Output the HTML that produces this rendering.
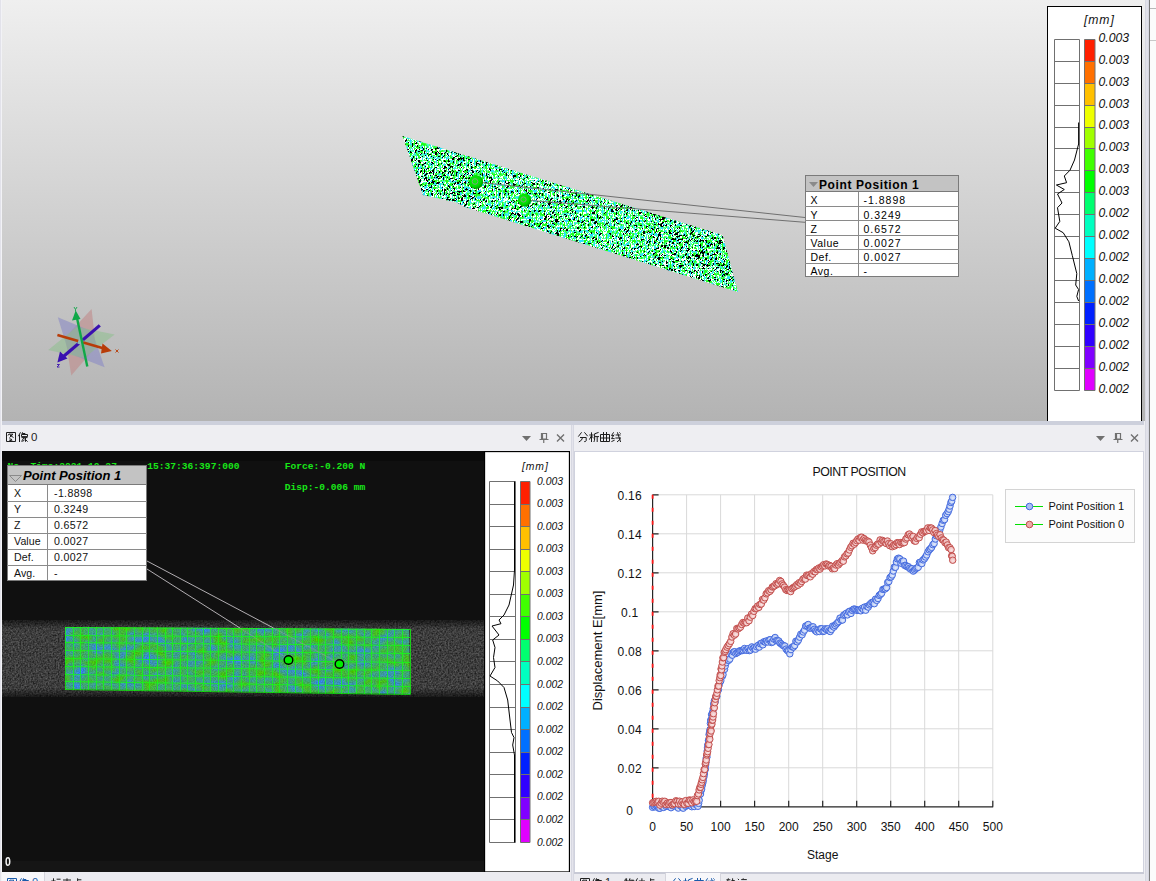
<!DOCTYPE html><html><head><meta charset="utf-8"><style>
*{margin:0;padding:0}
body{width:1156px;height:881px;overflow:hidden;position:relative;background:#eeeef2;font-family:"Liberation Sans",sans-serif}
.a{position:absolute}
</style></head><body><div class="a" style="left:0;top:0;width:1px;height:881px;background:#e2e2ea"></div><div class="a" style="left:1px;top:0;width:1px;height:881px;background:#f2f2f6"></div><div class="a" style="left:2px;top:0;width:1143px;height:421px;background:linear-gradient(#efefef,#b3b3b3)"></div><div class="a" style="left:1145px;top:0;width:4px;height:881px;background:linear-gradient(90deg,#d0d2dc,#e6e6ee,#d0d2dc)"></div><div class="a" style="left:1149px;top:0;width:1px;height:881px;background:#7a7a7a"></div><div class="a" style="left:1150px;top:0;width:6px;height:881px;background:#fbfbfb"></div><div class="a" style="left:1150px;top:8px;width:6px;height:1px;background:#b8b8b8"></div><div class="a" style="left:1150px;top:40px;width:6px;height:1px;background:#c8c8c8"></div><div class="a" style="left:2px;top:421px;width:1142px;height:4px;background:#cdd0dc"></div><div class="a" style="left:571px;top:425px;width:3px;height:456px;background:linear-gradient(90deg,#d0d2dc,#e4e4ec,#d0d2dc)"></div><svg class="a" width="1145" height="421" style="left:0;top:0">
<defs>
<clipPath id="cp"><polygon points="402.5,136 722.5,235 738,292 465,207 457,202.5 423,195"/></clipPath>
<clipPath id="cpl"><polygon points="395,130 470,150 480,215 395,215"/><polygon points="640,200 745,230 745,300 660,280"/></clipPath>
<filter id="blkf2" filterUnits="userSpaceOnUse" x="300" y="0" width="550" height="450" color-interpolation-filters="sRGB">
<feTurbulence type="fractalNoise" baseFrequency="1.0 0.3" numOctaves="2" seed="21"/>
<feColorMatrix type="matrix" values="0 0 0 0 0  0 0 0 0 0  0 0 0 0 0  3 0 0 0 -1"/>
<feComponentTransfer><feFuncA type="discrete" tableValues="1 1 0 0 0 0 0 0 0 0"/></feComponentTransfer>
</filter>
<filter id="colf" filterUnits="userSpaceOnUse" x="300" y="0" width="550" height="450" color-interpolation-filters="sRGB">
<feTurbulence type="fractalNoise" baseFrequency="0.5 0.3" numOctaves="2" seed="4"/>
<feColorMatrix type="matrix" values="3 0 0 0 -1  3 0 0 0 -1  3 0 0 0 -1  0 0 0 0 1"/>
<feComponentTransfer>
<feFuncR type="discrete" tableValues="0.1 0.15 0.2 0.3 1 1 0.35 0.3 0.2 0.15"/>
<feFuncG type="discrete" tableValues="1 1 1 1 1 1 1 1 0.92 0.88"/>
<feFuncB type="discrete" tableValues="0.1 0.15 0.25 0.45 1 1 0.75 0.8 0.85 1"/>
</feComponentTransfer>
</filter>
<filter id="blkf" filterUnits="userSpaceOnUse" x="300" y="0" width="550" height="450" color-interpolation-filters="sRGB">
<feTurbulence type="fractalNoise" baseFrequency="1.1 0.3" numOctaves="2" seed="8"/>
<feColorMatrix type="matrix" values="0 0 0 0 0  0 0 0 0 0  0 0 0 0 0  3 0 0 0 -1"/>
<feComponentTransfer><feFuncA type="discrete" tableValues="1 1 0 0 0 0 0 0 0 0"/></feComponentTransfer>
</filter>
<radialGradient id="sph" cx="0.4" cy="0.4" r="0.6"><stop offset="0" stop-color="#10f010"/><stop offset="0.7" stop-color="#00dd00"/><stop offset="1" stop-color="#009a00"/></radialGradient>
</defs>
<g clip-path="url(#cp)">
<rect x="395" y="130" width="350" height="170" fill="#fff" filter="url(#colf)"/>
<g transform="rotate(40 570 215)"><rect x="350" y="20" width="450" height="400" fill="#000" filter="url(#blkf)"/></g>
<g clip-path="url(#cpl)"><g transform="rotate(-30 570 215)"><rect x="350" y="20" width="450" height="400" fill="#000" filter="url(#blkf2)"/></g></g>
</g>
<path d="M476 182L805 217.5M524.5 200L805 222.3" stroke="#707070" stroke-width="1" fill="none"/>
<circle cx="476" cy="182" r="7" fill="url(#sph)"/><circle cx="475" cy="181.5" r="2.8" fill="none" stroke="#8a9a8a" stroke-width="0.9"/>
<circle cx="524.5" cy="200" r="6.6" fill="url(#sph)"/><circle cx="523.5" cy="199.5" r="2.6" fill="none" stroke="#8a9a8a" stroke-width="0.9"/>
</svg><svg class="a" width="90" height="90" viewBox="40 295 90 90" style="left:40px;top:295px">
<polygon points="91.6,309 95.8,347 71.3,375.5 65.2,337.6" fill="#c08a8a" fill-opacity="0.6"/>
<polygon points="57.8,317.2 92.2,331.4 104.6,367.3 68.8,353.2" fill="#8a8ac4" fill-opacity="0.6"/>
<polygon points="114.7,334.5 84.1,357.9 48.2,350 76.9,326.7" fill="#8ec08e" fill-opacity="0.55"/>
<path d="M99.8 325.4L64 356" stroke="#3a10b0" stroke-width="3.2"/>
<polygon points="57.4,362.5 60,351.5 67.5,358.5" fill="#3a10b0"/>
<path d="M57.4 335L104 348.5" stroke="#b83c08" stroke-width="2.6"/>
<polygon points="111.8,351 102.5,343.5 101,353.5" fill="#b83c08"/>
<rect x="78" y="339.5" width="5" height="5" fill="#90b8b0" transform="rotate(20 80.5 342)"/>
<path d="M87.3 366.4L77 318" stroke="#10a848" stroke-width="2.4"/>
<polygon points="75.7,310.4 72,320.5 80.5,319" fill="#10a848"/>
<path d="M74 307l1.5 2.5l1.5-2.5M75.5 309.5v2" stroke="#10a848" stroke-width="0.9" fill="none"/>
<path d="M115.5 349.5l3 3M118.5 349.5l-3 3" stroke="#b83c08" stroke-width="0.9"/>
<path d="M57 364.5h2.5l-2.5 2.5h2.5" stroke="#3a10b0" stroke-width="0.9" fill="none"/>
</svg><div class="a" style="left:805px;top:175px;width:154px;height:102.2px;background:#fff;border:1px solid #7a7a7a;box-sizing:border-box"></div><div class="a" style="left:806px;top:176px;width:152px;height:16px;background:#c3c3c3;border-bottom:1px solid #7a7a7a;box-sizing:border-box"></div><div class="a" style="left:805px;top:206.2px;width:154px;height:1px;background:#8a8a8a"></div><div class="a" style="left:805px;top:220.4px;width:154px;height:1px;background:#8a8a8a"></div><div class="a" style="left:805px;top:234.6px;width:154px;height:1px;background:#8a8a8a"></div><div class="a" style="left:805px;top:248.8px;width:154px;height:1px;background:#8a8a8a"></div><div class="a" style="left:805px;top:263.0px;width:154px;height:1px;background:#8a8a8a"></div><div class="a" style="left:858px;top:192px;width:1px;height:84.2px;background:#8a8a8a"></div><div class="a" style="left:810.5px;top:195.4px;font:normal normal 10.5px 'Liberation Sans',sans-serif;color:#000;line-height:1;white-space:nowrap;letter-spacing:0.5px">X</div><div class="a" style="left:863.5px;top:195.4px;font:normal normal 10.5px 'Liberation Sans',sans-serif;color:#000;line-height:1;white-space:nowrap;letter-spacing:1.0px">-1.8898</div><div class="a" style="left:810.5px;top:209.6px;font:normal normal 10.5px 'Liberation Sans',sans-serif;color:#000;line-height:1;white-space:nowrap;letter-spacing:0.5px">Y</div><div class="a" style="left:863.5px;top:209.6px;font:normal normal 10.5px 'Liberation Sans',sans-serif;color:#000;line-height:1;white-space:nowrap;letter-spacing:1.0px">0.3249</div><div class="a" style="left:810.5px;top:223.8px;font:normal normal 10.5px 'Liberation Sans',sans-serif;color:#000;line-height:1;white-space:nowrap;letter-spacing:0.5px">Z</div><div class="a" style="left:863.5px;top:223.8px;font:normal normal 10.5px 'Liberation Sans',sans-serif;color:#000;line-height:1;white-space:nowrap;letter-spacing:1.0px">0.6572</div><div class="a" style="left:810.5px;top:238.0px;font:normal normal 10.5px 'Liberation Sans',sans-serif;color:#000;line-height:1;white-space:nowrap;letter-spacing:0.5px">Value</div><div class="a" style="left:863.5px;top:238.0px;font:normal normal 10.5px 'Liberation Sans',sans-serif;color:#000;line-height:1;white-space:nowrap;letter-spacing:1.0px">0.0027</div><div class="a" style="left:810.5px;top:252.2px;font:normal normal 10.5px 'Liberation Sans',sans-serif;color:#000;line-height:1;white-space:nowrap;letter-spacing:0.5px">Def.</div><div class="a" style="left:863.5px;top:252.2px;font:normal normal 10.5px 'Liberation Sans',sans-serif;color:#000;line-height:1;white-space:nowrap;letter-spacing:1.0px">0.0027</div><div class="a" style="left:810.5px;top:266.4px;font:normal normal 10.5px 'Liberation Sans',sans-serif;color:#000;line-height:1;white-space:nowrap;letter-spacing:0.5px">Avg.</div><div class="a" style="left:863.5px;top:266.4px;font:normal normal 10.5px 'Liberation Sans',sans-serif;color:#000;line-height:1;white-space:nowrap;letter-spacing:1.0px">-</div><div class="a" style="left:819px;top:178.5px;font:normal bold 12px 'Liberation Sans',sans-serif;color:#000;line-height:1;white-space:nowrap;letter-spacing:0.6px">Point Position 1</div><svg class="a" width="10" height="8" style="left:809px;top:182px"><polygon points="0,0 9,0 4.5,5" fill="#8a8a8a"/></svg><svg class="a" width="95" height="415" viewBox="1047 6 95 415" style="left:1047px;top:6px"><rect x="1047.5" y="6.5" width="94" height="420" fill="#fff" stroke="#000" stroke-width="1"/><path d="M1054.5 39.5h25V390.5h-25zM1054.5 61.5h25M1054.5 83.5h25M1054.5 105.5h25M1054.5 127.5h25M1054.5 148.5h25M1054.5 170.5h25M1054.5 192.5h25M1054.5 214.5h25M1054.5 236.5h25M1054.5 258.5h25M1054.5 280.5h25M1054.5 302.5h25M1054.5 324.5h25M1054.5 346.5h25M1054.5 368.5h25" fill="none" stroke="#707070"/><rect x="1084.5" y="39.5" width="10.5" height="22.0" fill="#ff2000"/><rect x="1084.5" y="61.5" width="10.5" height="22.0" fill="#ff7000"/><rect x="1084.5" y="83.5" width="10.5" height="22.0" fill="#ffc000"/><rect x="1084.5" y="105.5" width="10.5" height="22.0" fill="#eeff00"/><rect x="1084.5" y="127.5" width="10.5" height="21.0" fill="#a0ff00"/><rect x="1084.5" y="148.5" width="10.5" height="22.0" fill="#40ff00"/><rect x="1084.5" y="170.5" width="10.5" height="22.0" fill="#00ff00"/><rect x="1084.5" y="192.5" width="10.5" height="22.0" fill="#00ff70"/><rect x="1084.5" y="214.5" width="10.5" height="22.0" fill="#00ffc0"/><rect x="1084.5" y="236.5" width="10.5" height="22.0" fill="#00ffff"/><rect x="1084.5" y="258.5" width="10.5" height="22.0" fill="#00b0ff"/><rect x="1084.5" y="280.5" width="10.5" height="22.0" fill="#0070ff"/><rect x="1084.5" y="302.5" width="10.5" height="22.0" fill="#0020ff"/><rect x="1084.5" y="324.5" width="10.5" height="22.0" fill="#3000ff"/><rect x="1084.5" y="346.5" width="10.5" height="22.0" fill="#8000ff"/><rect x="1084.5" y="368.5" width="10.5" height="22.0" fill="#e000ff"/><path d="M1084.5 39.5h10.5V390.5h-10.5zM1084.5 61.5h10.5M1084.5 83.5h10.5M1084.5 105.5h10.5M1084.5 127.5h10.5M1084.5 148.5h10.5M1084.5 170.5h10.5M1084.5 192.5h10.5M1084.5 214.5h10.5M1084.5 236.5h10.5M1084.5 258.5h10.5M1084.5 280.5h10.5M1084.5 302.5h10.5M1084.5 324.5h10.5M1084.5 346.5h10.5M1084.5 368.5h10.5" fill="none" stroke="#707070"/><polyline points="1078.6,122.5 1078.6,144.0 1074.5,160.0 1070.0,170.2 1064.3,176.0 1066.6,182.7 1056.4,185.0 1064.3,189.5 1057.5,194.0 1062.0,203.0 1057.5,207.7 1059.8,221.4 1055.2,228.2 1063.2,232.7 1068.9,241.8 1072.3,255.5 1076.8,273.6 1075.7,285.0 1078.6,289.5 1076.8,296.4 1078.6,301.0" fill="none" stroke="#000" stroke-width="1"/></svg><div class="a" style="left:1098.5px;top:31.6px;font:italic normal 12.2px 'Liberation Sans',sans-serif;color:#111;line-height:1;white-space:nowrap;">0.003</div><div class="a" style="left:1098.5px;top:53.6px;font:italic normal 12.2px 'Liberation Sans',sans-serif;color:#111;line-height:1;white-space:nowrap;">0.003</div><div class="a" style="left:1098.5px;top:75.5px;font:italic normal 12.2px 'Liberation Sans',sans-serif;color:#111;line-height:1;white-space:nowrap;">0.003</div><div class="a" style="left:1098.5px;top:97.5px;font:italic normal 12.2px 'Liberation Sans',sans-serif;color:#111;line-height:1;white-space:nowrap;">0.003</div><div class="a" style="left:1098.5px;top:119.4px;font:italic normal 12.2px 'Liberation Sans',sans-serif;color:#111;line-height:1;white-space:nowrap;">0.003</div><div class="a" style="left:1098.5px;top:141.4px;font:italic normal 12.2px 'Liberation Sans',sans-serif;color:#111;line-height:1;white-space:nowrap;">0.003</div><div class="a" style="left:1098.5px;top:163.3px;font:italic normal 12.2px 'Liberation Sans',sans-serif;color:#111;line-height:1;white-space:nowrap;">0.003</div><div class="a" style="left:1098.5px;top:185.3px;font:italic normal 12.2px 'Liberation Sans',sans-serif;color:#111;line-height:1;white-space:nowrap;">0.003</div><div class="a" style="left:1098.5px;top:207.2px;font:italic normal 12.2px 'Liberation Sans',sans-serif;color:#111;line-height:1;white-space:nowrap;">0.002</div><div class="a" style="left:1098.5px;top:229.2px;font:italic normal 12.2px 'Liberation Sans',sans-serif;color:#111;line-height:1;white-space:nowrap;">0.002</div><div class="a" style="left:1098.5px;top:251.1px;font:italic normal 12.2px 'Liberation Sans',sans-serif;color:#111;line-height:1;white-space:nowrap;">0.002</div><div class="a" style="left:1098.5px;top:273.1px;font:italic normal 12.2px 'Liberation Sans',sans-serif;color:#111;line-height:1;white-space:nowrap;">0.002</div><div class="a" style="left:1098.5px;top:295.0px;font:italic normal 12.2px 'Liberation Sans',sans-serif;color:#111;line-height:1;white-space:nowrap;">0.002</div><div class="a" style="left:1098.5px;top:317.0px;font:italic normal 12.2px 'Liberation Sans',sans-serif;color:#111;line-height:1;white-space:nowrap;">0.002</div><div class="a" style="left:1098.5px;top:338.9px;font:italic normal 12.2px 'Liberation Sans',sans-serif;color:#111;line-height:1;white-space:nowrap;">0.002</div><div class="a" style="left:1098.5px;top:360.9px;font:italic normal 12.2px 'Liberation Sans',sans-serif;color:#111;line-height:1;white-space:nowrap;">0.002</div><div class="a" style="left:1098.5px;top:382.8px;font:italic normal 12.2px 'Liberation Sans',sans-serif;color:#111;line-height:1;white-space:nowrap;">0.002</div><div class="a" style="left:1084px;top:14px;font:italic normal 12.2px 'Liberation Sans',sans-serif;color:#111;line-height:1;white-space:nowrap;letter-spacing:0.9px">[mm]</div><svg class="a" width="10" height="10" viewBox="0 0 10 10" style="left:6.0px;top:432px;overflow:visible"><path d="M0.5 0.5H9.5V9.5H0.5ZM3.2 1.8L2 3.5M3 2.2H7L3.5 5.5M4 3.2L7.5 5.5M3.5 6.7L6 7.6M3.2 8.2L6.5 9" fill="none" stroke="#1e1e1e" stroke-width="1.00"/></svg><svg class="a" width="10" height="10" viewBox="0 0 10 10" style="left:18.0px;top:432px;overflow:visible"><path d="M2.5 0.3L0.4 4.2M1.5 2.5V10M4.6 0.3L3.8 1.8M4.2 1.5H7L6.4 2.5M3.5 2.5H9.5V4.6H3.5ZM3.5 5.6H9.5M6 5.6L3.5 9.5M6.5 6.6L9.6 9.6M6.6 7.6L4.5 9.8M7.5 6V9.8" fill="none" stroke="#1e1e1e" stroke-width="1.00"/></svg><div class="a" style="left:31px;top:432.2px;font:normal normal 11.5px 'Liberation Sans',sans-serif;color:#1e1e1e;line-height:1;white-space:nowrap;">0</div><svg class="a" width="10" height="10" viewBox="0 0 10 10" style="left:578.0px;top:432px;overflow:visible"><path d="M3.6 0.3L0.3 4.6M6.4 0.3L9.7 4.2M2 5.5H8.2V8.8L7.2 9.6H6.2M4.6 5.5Q4.2 8.6 0.8 10" fill="none" stroke="#1e1e1e" stroke-width="1.00"/></svg><svg class="a" width="10" height="10" viewBox="0 0 10 10" style="left:589.0px;top:432px;overflow:visible"><path d="M0.3 3H4.6M2.5 0.3V10M2.5 3.6L0.4 7.6M2.6 4.2L4.6 6M9.6 0.4L5.6 1.8V7Q5.6 9 4.8 10M5.6 4.6H10M8.2 4.6V10" fill="none" stroke="#1e1e1e" stroke-width="1.00"/></svg><svg class="a" width="10" height="10" viewBox="0 0 10 10" style="left:600.0px;top:432px;overflow:visible"><path d="M0.5 2.5H9.5V9.5H0.5ZM3.5 0V9.5M6.5 0V9.5M0.5 6H9.5" fill="none" stroke="#1e1e1e" stroke-width="1.00"/></svg><svg class="a" width="10" height="10" viewBox="0 0 10 10" style="left:611.0px;top:432px;overflow:visible"><path d="M2.6 0.3L0.5 3.6H3M3.2 2.6L0.5 6.6H3.6M0.4 9.6L3.6 8.2M4.6 3H9.6M4.4 6H10M6.4 0.3L9.6 10M9.6 6.8L6 10M8.4 0.4L9.6 1.6" fill="none" stroke="#1e1e1e" stroke-width="1.00"/></svg><svg class="a" width="50" height="14" style="left:522px;top:431px"><polygon points="0,5 9,5 4.5,10" fill="#707070"/><path d="M19.5 2.5h5v5.5h-5zM17.5 8.5h9M21.75 8.5v3.5" stroke="#707070" stroke-width="1.2" fill="none"/><path d="M20.3 2.5v5.5" stroke="#707070" stroke-width="1.6"/><path d="M35 3.5l7 7M42 3.5l-7 7" stroke="#707070" stroke-width="1.4"/></svg><svg class="a" width="50" height="14" style="left:1096px;top:431px"><polygon points="0,5 9,5 4.5,10" fill="#707070"/><path d="M19.5 2.5h5v5.5h-5zM17.5 8.5h9M21.75 8.5v3.5" stroke="#707070" stroke-width="1.2" fill="none"/><path d="M20.3 2.5v5.5" stroke="#707070" stroke-width="1.6"/><path d="M35 3.5l7 7M42 3.5l-7 7" stroke="#707070" stroke-width="1.4"/></svg><svg class="a" width="482" height="421" viewBox="2 451 482 421" style="left:2px;top:451px">
<defs>
<filter id="gn" filterUnits="userSpaceOnUse" x="0" y="610" width="490" height="95" color-interpolation-filters="sRGB">
<feTurbulence type="fractalNoise" baseFrequency="0.6" numOctaves="2" seed="9"/>
<feColorMatrix type="matrix" values="0.4 0 0 0 0.04  0.4 0 0 0 0.04  0.4 0 0 0 0.04  0 0 0 0 1"/>
<feComposite in2="SourceGraphic" operator="in"/>
</filter>
<filter id="cn" filterUnits="userSpaceOnUse" x="60" y="620" width="360" height="80" color-interpolation-filters="sRGB">
<feTurbulence type="fractalNoise" baseFrequency="0.07 0.09" numOctaves="3" seed="12" result="lo"/>
<feColorMatrix in="lo" type="matrix" values="0.1 0 0 0 0.22  0.4 0 0 0 0.5  -1.4 0 0 0 1.18  0 0 0 0 1" result="c"/>
<feTurbulence type="fractalNoise" baseFrequency="0.9" numOctaves="1" seed="2" result="hi"/>
<feColorMatrix in="hi" type="matrix" values="0 0 0 0 0  0 0 0 0 0  0 0 0 0 0  -0.45 0 0 0 0.3" result="hk"/>
<feComposite in="hk" in2="c" operator="over"/>
<feComposite in2="SourceGraphic" operator="in"/>
</filter>
<linearGradient id="bandg" x1="0" y1="0" x2="0" y2="1"><stop offset="0" stop-color="#000" stop-opacity="0.6"/><stop offset="0.12" stop-color="#000" stop-opacity="0"/><stop offset="0.88" stop-color="#000" stop-opacity="0"/><stop offset="1" stop-color="#000" stop-opacity="0.6"/></linearGradient>
</defs>
<rect x="2" y="451" width="482" height="421" fill="#101010"/><rect x="2" y="451" width="482" height="10" fill="#0b0b0b"/>
<rect x="2" y="861" width="482" height="11" fill="#151515"/>
<rect x="2" y="620" width="482" height="77" fill="#fff" filter="url(#gn)"/>
<rect x="2" y="620" width="482" height="77" fill="url(#bandg)"/>
<polygon points="65,627 409,629 410,694 66,689" fill="#fff" filter="url(#cn)"/>
<path d="M65.5 627.0V689.5M73.5 627.0V689.6M80.5 627.1V689.7M88.5 627.1V689.8M96.5 627.2V690.0M103.5 627.2V690.1M111.5 627.3V690.2M119.5 627.3V690.3M126.5 627.4V690.4M134.5 627.4V690.5M142.5 627.5V690.6M149.5 627.5V690.7M157.5 627.5V690.8M165.5 627.6V691.0M172.5 627.6V691.1M180.5 627.7V691.2M187.5 627.7V691.3M195.5 627.8V691.4M203.5 627.8V691.5M210.5 627.8V691.6M218.5 627.9V691.7M226.5 627.9V691.8M233.5 628.0V691.9M241.5 628.0V692.1M249.5 628.1V692.2M256.5 628.1V692.3M264.5 628.2V692.4M272.5 628.2V692.5M279.5 628.2V692.6M287.5 628.3V692.7M295.5 628.3V692.9M302.5 628.4V693.0M310.5 628.4V693.1M318.5 628.5V693.2M325.5 628.5V693.3M333.5 628.6V693.4M341.5 628.6V693.5M348.5 628.6V693.6M356.5 628.7V693.7M364.5 628.7V693.9M371.5 628.8V694.0M379.5 628.8V694.1M387.5 628.9V694.2M394.5 628.9V694.3M402.5 629.0V694.4M410.5 629.0V694.5M65 627.5L410 629.5M65 635.5L410 637.5M65 642.5L410 645.5M65 650.5L410 653.5M65 658.5L410 662.5M65 666.5L410 670.5M65 674.5L410 678.5M65 681.5L410 686.5M65 689.5L410 694.5" stroke="#10ff10" stroke-width="1" fill="none" opacity="0.75"/><path d="M147 561L273.5 628M147 569L240 628" stroke="#c4c0c4" stroke-width="0.9" fill="none"/><path d="M273.5 628L339 663M240 628L288 659" stroke="#b090b0" stroke-width="0.9" fill="none" opacity="0.5"/><circle cx="288.5" cy="660" r="4.3" fill="#00ee00" stroke="#000" stroke-width="1.4"/><circle cx="339.5" cy="664" r="4.3" fill="#00ee00" stroke="#000" stroke-width="1.4"/></svg><div class="a" style="left:7.5px;top:462.3px;font:bold 9.6px 'Liberation Mono',monospace;color:#18e818;line-height:1;white-space:nowrap">No. Time:2021-10-27</div><div class="a" style="left:147.3px;top:462.3px;font:bold 9.6px 'Liberation Mono',monospace;color:#18e818;line-height:1;white-space:nowrap">15:37:36:397:000</div><div class="a" style="left:284.7px;top:462.3px;font:bold 9.6px 'Liberation Mono',monospace;color:#18e818;line-height:1;white-space:nowrap">Force:-0.200 N</div><div class="a" style="left:284.7px;top:483.2px;font:bold 9.6px 'Liberation Mono',monospace;color:#18e818;line-height:1;white-space:nowrap">Disp:-0.006 mm</div><div class="a" style="left:4.6px;top:854.6px;font:normal bold 13.5px 'Liberation Sans',sans-serif;color:#f4f4f4;line-height:1;white-space:nowrap;transform:scaleX(0.78);transform-origin:0 0">0</div><div class="a" style="left:7px;top:465px;width:140px;height:116.0px;background:#fff;border:1px solid #7a7a7a;box-sizing:border-box"></div><div class="a" style="left:8px;top:466px;width:138px;height:19px;background:#c3c3c3;border-bottom:1px solid #7a7a7a;box-sizing:border-box"></div><div class="a" style="left:7px;top:501.0px;width:140px;height:1px;background:#8a8a8a"></div><div class="a" style="left:7px;top:517.0px;width:140px;height:1px;background:#8a8a8a"></div><div class="a" style="left:7px;top:533.0px;width:140px;height:1px;background:#8a8a8a"></div><div class="a" style="left:7px;top:549.0px;width:140px;height:1px;background:#8a8a8a"></div><div class="a" style="left:7px;top:565.0px;width:140px;height:1px;background:#8a8a8a"></div><div class="a" style="left:47px;top:485px;width:1px;height:95.0px;background:#8a8a8a"></div><div class="a" style="left:14px;top:488.2px;font:normal normal 10.6px 'Liberation Sans',sans-serif;color:#111;line-height:1;white-space:nowrap;letter-spacing:0.1px">X</div><div class="a" style="left:54px;top:488.2px;font:normal normal 10.6px 'Liberation Sans',sans-serif;color:#111;line-height:1;white-space:nowrap;letter-spacing:0.35px">-1.8898</div><div class="a" style="left:14px;top:504.2px;font:normal normal 10.6px 'Liberation Sans',sans-serif;color:#111;line-height:1;white-space:nowrap;letter-spacing:0.1px">Y</div><div class="a" style="left:54px;top:504.2px;font:normal normal 10.6px 'Liberation Sans',sans-serif;color:#111;line-height:1;white-space:nowrap;letter-spacing:0.35px">0.3249</div><div class="a" style="left:14px;top:520.2px;font:normal normal 10.6px 'Liberation Sans',sans-serif;color:#111;line-height:1;white-space:nowrap;letter-spacing:0.1px">Z</div><div class="a" style="left:54px;top:520.2px;font:normal normal 10.6px 'Liberation Sans',sans-serif;color:#111;line-height:1;white-space:nowrap;letter-spacing:0.35px">0.6572</div><div class="a" style="left:14px;top:536.2px;font:normal normal 10.6px 'Liberation Sans',sans-serif;color:#111;line-height:1;white-space:nowrap;letter-spacing:0.1px">Value</div><div class="a" style="left:54px;top:536.2px;font:normal normal 10.6px 'Liberation Sans',sans-serif;color:#111;line-height:1;white-space:nowrap;letter-spacing:0.35px">0.0027</div><div class="a" style="left:14px;top:552.2px;font:normal normal 10.6px 'Liberation Sans',sans-serif;color:#111;line-height:1;white-space:nowrap;letter-spacing:0.1px">Def.</div><div class="a" style="left:54px;top:552.2px;font:normal normal 10.6px 'Liberation Sans',sans-serif;color:#111;line-height:1;white-space:nowrap;letter-spacing:0.35px">0.0027</div><div class="a" style="left:14px;top:568.2px;font:normal normal 10.6px 'Liberation Sans',sans-serif;color:#111;line-height:1;white-space:nowrap;letter-spacing:0.1px">Avg.</div><div class="a" style="left:54px;top:568.2px;font:normal normal 10.6px 'Liberation Sans',sans-serif;color:#111;line-height:1;white-space:nowrap;letter-spacing:0.35px">-</div><div class="a" style="left:23px;top:469px;font:italic bold 13px 'Liberation Sans',sans-serif;color:#000;line-height:1;white-space:nowrap;">Point Position 1</div><svg class="a" width="14" height="10" style="left:9px;top:475px"><polygon points="0.5,0.5 12.5,0.5 6.5,6.5" fill="none" stroke="#8a8a8a"/></svg><svg class="a" width="86" height="422" viewBox="484 451 86 422" style="left:484px;top:451px"><rect x="484.5" y="451.5" width="85" height="420.5" fill="#fff" stroke="#000" stroke-width="1.3"/><path d="M489.5 481.5h26V842.5h-26zM489.5 504.5h26M489.5 526.5h26M489.5 549.5h26M489.5 571.5h26M489.5 594.5h26M489.5 616.5h26M489.5 639.5h26M489.5 661.5h26M489.5 684.5h26M489.5 707.5h26M489.5 729.5h26M489.5 752.5h26M489.5 774.5h26M489.5 797.5h26M489.5 819.5h26" fill="none" stroke="#707070"/><rect x="520.5" y="481.5" width="9.5" height="23.0" fill="#ff2000"/><rect x="520.5" y="504.5" width="9.5" height="22.0" fill="#ff7000"/><rect x="520.5" y="526.5" width="9.5" height="23.0" fill="#ffc000"/><rect x="520.5" y="549.5" width="9.5" height="22.0" fill="#eeff00"/><rect x="520.5" y="571.5" width="9.5" height="23.0" fill="#a0ff00"/><rect x="520.5" y="594.5" width="9.5" height="22.0" fill="#40ff00"/><rect x="520.5" y="616.5" width="9.5" height="23.0" fill="#00ff00"/><rect x="520.5" y="639.5" width="9.5" height="22.0" fill="#00ff70"/><rect x="520.5" y="661.5" width="9.5" height="23.0" fill="#00ffc0"/><rect x="520.5" y="684.5" width="9.5" height="23.0" fill="#00ffff"/><rect x="520.5" y="707.5" width="9.5" height="22.0" fill="#00b0ff"/><rect x="520.5" y="729.5" width="9.5" height="23.0" fill="#0070ff"/><rect x="520.5" y="752.5" width="9.5" height="22.0" fill="#0020ff"/><rect x="520.5" y="774.5" width="9.5" height="23.0" fill="#3000ff"/><rect x="520.5" y="797.5" width="9.5" height="22.0" fill="#8000ff"/><rect x="520.5" y="819.5" width="9.5" height="23.0" fill="#e000ff"/><path d="M520.5 481.5h9.5V842.5h-9.5zM520.5 504.5h9.5M520.5 526.5h9.5M520.5 549.5h9.5M520.5 571.5h9.5M520.5 594.5h9.5M520.5 616.5h9.5M520.5 639.5h9.5M520.5 661.5h9.5M520.5 684.5h9.5M520.5 707.5h9.5M520.5 729.5h9.5M520.5 752.5h9.5M520.5 774.5h9.5M520.5 797.5h9.5M520.5 819.5h9.5" fill="none" stroke="#707070"/><polyline points="514.5,481.5 514.5,570.0 513.5,585.0 509.0,605.0 504.0,615.0 499.0,620.0 501.0,623.7 492.0,626.0 499.0,635.0 492.7,640.0 495.0,647.5 493.5,657.5 495.0,667.5 490.0,676.0 497.7,681.0 504.0,687.5 507.7,700.0 510.0,720.0 511.5,732.5 514.0,737.5 512.7,745.0 514.5,755.0 514.5,842.5" fill="none" stroke="#000" stroke-width="1"/></svg><div class="a" style="left:537px;top:476.5px;font:italic normal 10.4px 'Liberation Sans',sans-serif;color:#111;line-height:1;white-space:nowrap;">0.003</div><div class="a" style="left:537px;top:499.1px;font:italic normal 10.4px 'Liberation Sans',sans-serif;color:#111;line-height:1;white-space:nowrap;">0.003</div><div class="a" style="left:537px;top:521.6px;font:italic normal 10.4px 'Liberation Sans',sans-serif;color:#111;line-height:1;white-space:nowrap;">0.003</div><div class="a" style="left:537px;top:544.2px;font:italic normal 10.4px 'Liberation Sans',sans-serif;color:#111;line-height:1;white-space:nowrap;">0.003</div><div class="a" style="left:537px;top:566.7px;font:italic normal 10.4px 'Liberation Sans',sans-serif;color:#111;line-height:1;white-space:nowrap;">0.003</div><div class="a" style="left:537px;top:589.3px;font:italic normal 10.4px 'Liberation Sans',sans-serif;color:#111;line-height:1;white-space:nowrap;">0.003</div><div class="a" style="left:537px;top:611.9px;font:italic normal 10.4px 'Liberation Sans',sans-serif;color:#111;line-height:1;white-space:nowrap;">0.003</div><div class="a" style="left:537px;top:634.4px;font:italic normal 10.4px 'Liberation Sans',sans-serif;color:#111;line-height:1;white-space:nowrap;">0.003</div><div class="a" style="left:537px;top:657.0px;font:italic normal 10.4px 'Liberation Sans',sans-serif;color:#111;line-height:1;white-space:nowrap;">0.002</div><div class="a" style="left:537px;top:679.5px;font:italic normal 10.4px 'Liberation Sans',sans-serif;color:#111;line-height:1;white-space:nowrap;">0.002</div><div class="a" style="left:537px;top:702.1px;font:italic normal 10.4px 'Liberation Sans',sans-serif;color:#111;line-height:1;white-space:nowrap;">0.002</div><div class="a" style="left:537px;top:724.7px;font:italic normal 10.4px 'Liberation Sans',sans-serif;color:#111;line-height:1;white-space:nowrap;">0.002</div><div class="a" style="left:537px;top:747.2px;font:italic normal 10.4px 'Liberation Sans',sans-serif;color:#111;line-height:1;white-space:nowrap;">0.002</div><div class="a" style="left:537px;top:769.8px;font:italic normal 10.4px 'Liberation Sans',sans-serif;color:#111;line-height:1;white-space:nowrap;">0.002</div><div class="a" style="left:537px;top:792.3px;font:italic normal 10.4px 'Liberation Sans',sans-serif;color:#111;line-height:1;white-space:nowrap;">0.002</div><div class="a" style="left:537px;top:814.9px;font:italic normal 10.4px 'Liberation Sans',sans-serif;color:#111;line-height:1;white-space:nowrap;">0.002</div><div class="a" style="left:537px;top:837.5px;font:italic normal 10.4px 'Liberation Sans',sans-serif;color:#111;line-height:1;white-space:nowrap;">0.002</div><div class="a" style="left:522px;top:461.5px;font:italic normal 10.4px 'Liberation Sans',sans-serif;color:#111;line-height:1;white-space:nowrap;letter-spacing:0.9px">[mm]</div><div class="a" style="left:574px;top:451px;width:570px;height:421px;background:#fff;border:1px solid #d0d2de;border-bottom:none;box-sizing:border-box"></div><svg class="a" width="570" height="421" viewBox="574 451 570 421" style="left:574px;top:451px"><path d="M686.6 494.8V806.8M720.6 494.8V806.8M754.6 494.8V806.8M788.7 494.8V806.8M822.7 494.8V806.8M856.7 494.8V806.8M890.7 494.8V806.8M924.7 494.8V806.8M958.7 494.8V806.8M992.8 494.8V806.8M652.6 767.8H992.8M652.6 728.8H992.8M652.6 689.8H992.8M652.6 650.8H992.8M652.6 611.8H992.8M652.6 572.8H992.8M652.6 533.8H992.8M652.6 494.8H992.8" stroke="#d9d9d9" stroke-width="1" fill="none"/><path d="M652.6 494.8V806.8H993.2M686.6 806.8v-6M720.6 806.8v-6M754.6 806.8v-6M788.7 806.8v-6M822.7 806.8v-6M856.7 806.8v-6M890.7 806.8v-6M924.7 806.8v-6M958.7 806.8v-6M992.8 806.8v-6M652.6 767.8h6M652.6 728.8h6M652.6 689.8h6M652.6 650.8h6M652.6 611.8h6M652.6 572.8h6M652.6 533.8h6M652.6 494.8h6" stroke="#262626" stroke-width="1.2" fill="none"/><path d="M652.6 494.8V806.8" stroke="#ff1818" stroke-width="1.8" stroke-dasharray="4 9" fill="none"/><defs><radialGradient id="gb" cx="0.55" cy="0.6" r="0.6"><stop offset="0" stop-color="#e4ecfc"/><stop offset="1" stop-color="#a8bcf0"/></radialGradient><radialGradient id="gr" cx="0.55" cy="0.6" r="0.6"><stop offset="0" stop-color="#fbe6e6"/><stop offset="1" stop-color="#eaaeae"/></radialGradient></defs><g fill="url(#gb)" stroke="#3f66dd" stroke-width="0.95"><circle cx="652.6" cy="807.3" r="3.25"/><circle cx="653.8" cy="806.0" r="3.25"/><circle cx="655.0" cy="806.8" r="3.25"/><circle cx="656.3" cy="805.8" r="3.25"/><circle cx="657.5" cy="805.7" r="3.25"/><circle cx="658.7" cy="808.1" r="3.25"/><circle cx="659.9" cy="808.3" r="3.25"/><circle cx="661.2" cy="804.8" r="3.25"/><circle cx="662.4" cy="807.2" r="3.25"/><circle cx="663.6" cy="807.4" r="3.25"/><circle cx="664.8" cy="804.1" r="3.25"/><circle cx="666.1" cy="806.3" r="3.25"/><circle cx="667.3" cy="804.8" r="3.25"/><circle cx="668.5" cy="806.3" r="3.25"/><circle cx="669.7" cy="805.6" r="3.25"/><circle cx="671.0" cy="807.7" r="3.25"/><circle cx="672.2" cy="805.6" r="3.25"/><circle cx="673.4" cy="804.6" r="3.25"/><circle cx="674.6" cy="806.1" r="3.25"/><circle cx="675.9" cy="805.2" r="3.25"/><circle cx="677.1" cy="805.5" r="3.25"/><circle cx="678.3" cy="808.1" r="3.25"/><circle cx="679.5" cy="805.1" r="3.25"/><circle cx="680.8" cy="805.8" r="3.25"/><circle cx="682.0" cy="807.1" r="3.25"/><circle cx="683.2" cy="808.2" r="3.25"/><circle cx="684.4" cy="804.6" r="3.25"/><circle cx="685.7" cy="806.3" r="3.25"/><circle cx="686.9" cy="805.3" r="3.25"/><circle cx="688.1" cy="804.6" r="3.25"/><circle cx="689.3" cy="805.3" r="3.25"/><circle cx="690.6" cy="804.4" r="3.25"/><circle cx="691.8" cy="806.7" r="3.25"/><circle cx="693.0" cy="804.9" r="3.25"/><circle cx="694.2" cy="806.5" r="3.25"/><circle cx="695.5" cy="804.3" r="3.25"/><circle cx="696.7" cy="804.6" r="3.25"/><circle cx="697.9" cy="806.3" r="3.25"/><circle cx="698.6" cy="803.4" r="3.25"/><circle cx="699.2" cy="800.3" r="3.25"/><circle cx="699.9" cy="794.4" r="3.25"/><circle cx="700.5" cy="794.0" r="3.25"/><circle cx="701.1" cy="790.4" r="3.25"/><circle cx="701.6" cy="789.1" r="3.25"/><circle cx="702.2" cy="785.4" r="3.25"/><circle cx="702.7" cy="783.2" r="3.25"/><circle cx="703.3" cy="780.6" r="3.25"/><circle cx="703.9" cy="776.9" r="3.25"/><circle cx="704.4" cy="774.1" r="3.25"/><circle cx="704.9" cy="770.3" r="3.25"/><circle cx="705.3" cy="768.6" r="3.25"/><circle cx="705.6" cy="764.8" r="3.25"/><circle cx="705.9" cy="762.3" r="3.25"/><circle cx="706.2" cy="758.9" r="3.25"/><circle cx="706.5" cy="757.5" r="3.25"/><circle cx="706.9" cy="756.9" r="3.25"/><circle cx="707.2" cy="751.1" r="3.25"/><circle cx="707.5" cy="747.9" r="3.25"/><circle cx="707.8" cy="745.4" r="3.25"/><circle cx="708.2" cy="744.1" r="3.25"/><circle cx="708.5" cy="740.6" r="3.25"/><circle cx="708.8" cy="740.0" r="3.25"/><circle cx="709.1" cy="734.6" r="3.25"/><circle cx="709.5" cy="732.9" r="3.25"/><circle cx="709.8" cy="731.4" r="3.25"/><circle cx="710.1" cy="729.5" r="3.25"/><circle cx="710.4" cy="723.4" r="3.25"/><circle cx="710.8" cy="720.0" r="3.25"/><circle cx="711.1" cy="720.6" r="3.25"/><circle cx="711.6" cy="714.8" r="3.25"/><circle cx="712.2" cy="713.7" r="3.25"/><circle cx="712.7" cy="712.1" r="3.25"/><circle cx="713.2" cy="708.7" r="3.25"/><circle cx="713.7" cy="703.9" r="3.25"/><circle cx="714.4" cy="700.8" r="3.25"/><circle cx="715.2" cy="701.6" r="3.25"/><circle cx="716.0" cy="696.5" r="3.25"/><circle cx="716.8" cy="696.3" r="3.25"/><circle cx="717.6" cy="690.7" r="3.25"/><circle cx="718.4" cy="689.7" r="3.25"/><circle cx="719.2" cy="684.6" r="3.25"/><circle cx="720.1" cy="681.5" r="3.25"/><circle cx="720.8" cy="680.8" r="3.25"/><circle cx="721.5" cy="676.0" r="3.25"/><circle cx="722.3" cy="676.3" r="3.25"/><circle cx="723.0" cy="674.6" r="3.25"/><circle cx="723.8" cy="669.6" r="3.25"/><circle cx="724.5" cy="669.4" r="3.25"/><circle cx="725.2" cy="666.0" r="3.25"/><circle cx="726.1" cy="662.7" r="3.25"/><circle cx="727.4" cy="660.1" r="3.25"/><circle cx="728.6" cy="660.3" r="3.25"/><circle cx="729.8" cy="659.1" r="3.25"/><circle cx="731.0" cy="653.8" r="3.25"/><circle cx="732.3" cy="655.2" r="3.25"/><circle cx="733.5" cy="652.0" r="3.25"/><circle cx="734.7" cy="651.7" r="3.25"/><circle cx="735.9" cy="653.5" r="3.25"/><circle cx="737.2" cy="652.6" r="3.25"/><circle cx="738.4" cy="651.9" r="3.25"/><circle cx="739.6" cy="650.9" r="3.25"/><circle cx="740.8" cy="650.7" r="3.25"/><circle cx="742.1" cy="650.6" r="3.25"/><circle cx="743.3" cy="650.1" r="3.25"/><circle cx="744.5" cy="648.5" r="3.25"/><circle cx="745.7" cy="650.1" r="3.25"/><circle cx="746.9" cy="650.2" r="3.25"/><circle cx="748.2" cy="648.7" r="3.25"/><circle cx="749.4" cy="650.6" r="3.25"/><circle cx="750.6" cy="650.0" r="3.25"/><circle cx="751.8" cy="646.9" r="3.25"/><circle cx="753.1" cy="648.4" r="3.25"/><circle cx="754.3" cy="647.6" r="3.25"/><circle cx="755.5" cy="649.2" r="3.25"/><circle cx="756.7" cy="646.8" r="3.25"/><circle cx="758.0" cy="645.4" r="3.25"/><circle cx="759.2" cy="647.1" r="3.25"/><circle cx="760.4" cy="643.8" r="3.25"/><circle cx="761.6" cy="643.1" r="3.25"/><circle cx="762.9" cy="644.8" r="3.25"/><circle cx="764.1" cy="641.7" r="3.25"/><circle cx="765.3" cy="642.1" r="3.25"/><circle cx="766.5" cy="640.9" r="3.25"/><circle cx="767.8" cy="642.0" r="3.25"/><circle cx="769.0" cy="640.1" r="3.25"/><circle cx="770.2" cy="639.7" r="3.25"/><circle cx="771.4" cy="642.5" r="3.25"/><circle cx="772.7" cy="642.0" r="3.25"/><circle cx="773.9" cy="639.1" r="3.25"/><circle cx="775.1" cy="637.5" r="3.25"/><circle cx="776.3" cy="640.6" r="3.25"/><circle cx="777.6" cy="640.6" r="3.25"/><circle cx="778.8" cy="641.0" r="3.25"/><circle cx="780.0" cy="643.1" r="3.25"/><circle cx="781.2" cy="643.9" r="3.25"/><circle cx="782.5" cy="645.1" r="3.25"/><circle cx="783.7" cy="645.8" r="3.25"/><circle cx="784.9" cy="646.0" r="3.25"/><circle cx="786.1" cy="649.1" r="3.25"/><circle cx="787.4" cy="650.6" r="3.25"/><circle cx="788.6" cy="650.8" r="3.25"/><circle cx="789.8" cy="653.8" r="3.25"/><circle cx="791.0" cy="649.6" r="3.25"/><circle cx="792.3" cy="647.0" r="3.25"/><circle cx="793.5" cy="647.0" r="3.25"/><circle cx="794.7" cy="645.5" r="3.25"/><circle cx="795.9" cy="641.2" r="3.25"/><circle cx="797.2" cy="641.8" r="3.25"/><circle cx="798.4" cy="640.1" r="3.25"/><circle cx="799.6" cy="637.2" r="3.25"/><circle cx="800.8" cy="634.2" r="3.25"/><circle cx="802.1" cy="634.8" r="3.25"/><circle cx="803.3" cy="632.0" r="3.25"/><circle cx="804.5" cy="630.1" r="3.25"/><circle cx="805.7" cy="626.0" r="3.25"/><circle cx="807.0" cy="625.8" r="3.25"/><circle cx="808.2" cy="624.5" r="3.25"/><circle cx="809.4" cy="628.1" r="3.25"/><circle cx="810.6" cy="628.0" r="3.25"/><circle cx="811.8" cy="627.2" r="3.25"/><circle cx="813.1" cy="626.8" r="3.25"/><circle cx="814.3" cy="629.3" r="3.25"/><circle cx="815.5" cy="630.9" r="3.25"/><circle cx="816.7" cy="631.8" r="3.25"/><circle cx="818.0" cy="630.0" r="3.25"/><circle cx="819.2" cy="631.5" r="3.25"/><circle cx="820.4" cy="628.8" r="3.25"/><circle cx="821.6" cy="628.7" r="3.25"/><circle cx="822.9" cy="631.5" r="3.25"/><circle cx="824.1" cy="631.1" r="3.25"/><circle cx="825.3" cy="628.8" r="3.25"/><circle cx="826.5" cy="629.5" r="3.25"/><circle cx="827.8" cy="628.8" r="3.25"/><circle cx="829.0" cy="630.8" r="3.25"/><circle cx="830.2" cy="631.5" r="3.25"/><circle cx="831.4" cy="629.5" r="3.25"/><circle cx="832.7" cy="626.1" r="3.25"/><circle cx="833.9" cy="627.1" r="3.25"/><circle cx="835.1" cy="625.5" r="3.25"/><circle cx="836.3" cy="624.0" r="3.25"/><circle cx="837.6" cy="622.7" r="3.25"/><circle cx="838.8" cy="621.5" r="3.25"/><circle cx="840.0" cy="618.1" r="3.25"/><circle cx="841.2" cy="620.2" r="3.25"/><circle cx="842.5" cy="620.0" r="3.25"/><circle cx="843.7" cy="615.2" r="3.25"/><circle cx="844.9" cy="614.6" r="3.25"/><circle cx="846.1" cy="613.4" r="3.25"/><circle cx="847.4" cy="614.9" r="3.25"/><circle cx="848.6" cy="611.9" r="3.25"/><circle cx="849.8" cy="611.2" r="3.25"/><circle cx="851.0" cy="613.4" r="3.25"/><circle cx="852.3" cy="610.4" r="3.25"/><circle cx="853.5" cy="609.2" r="3.25"/><circle cx="854.7" cy="609.1" r="3.25"/><circle cx="855.9" cy="609.6" r="3.25"/><circle cx="857.2" cy="610.4" r="3.25"/><circle cx="858.4" cy="610.0" r="3.25"/><circle cx="859.6" cy="610.3" r="3.25"/><circle cx="860.8" cy="610.8" r="3.25"/><circle cx="862.1" cy="608.4" r="3.25"/><circle cx="863.3" cy="609.5" r="3.25"/><circle cx="864.5" cy="607.1" r="3.25"/><circle cx="865.7" cy="610.2" r="3.25"/><circle cx="867.0" cy="606.4" r="3.25"/><circle cx="868.2" cy="607.1" r="3.25"/><circle cx="869.4" cy="604.9" r="3.25"/><circle cx="870.6" cy="603.7" r="3.25"/><circle cx="871.9" cy="602.4" r="3.25"/><circle cx="873.1" cy="602.5" r="3.25"/><circle cx="874.3" cy="603.7" r="3.25"/><circle cx="875.5" cy="599.2" r="3.25"/><circle cx="876.7" cy="600.4" r="3.25"/><circle cx="878.0" cy="598.5" r="3.25"/><circle cx="879.2" cy="595.4" r="3.25"/><circle cx="880.4" cy="594.4" r="3.25"/><circle cx="881.6" cy="593.3" r="3.25"/><circle cx="882.9" cy="589.4" r="3.25"/><circle cx="884.1" cy="589.2" r="3.25"/><circle cx="885.3" cy="588.8" r="3.25"/><circle cx="886.5" cy="587.6" r="3.25"/><circle cx="887.7" cy="582.4" r="3.25"/><circle cx="888.8" cy="581.5" r="3.25"/><circle cx="890.0" cy="577.6" r="3.25"/><circle cx="891.1" cy="576.9" r="3.25"/><circle cx="892.2" cy="575.0" r="3.25"/><circle cx="893.3" cy="571.0" r="3.25"/><circle cx="894.3" cy="567.1" r="3.25"/><circle cx="895.4" cy="567.3" r="3.25"/><circle cx="896.4" cy="562.0" r="3.25"/><circle cx="897.4" cy="558.9" r="3.25"/><circle cx="898.6" cy="558.2" r="3.25"/><circle cx="899.8" cy="558.9" r="3.25"/><circle cx="901.0" cy="563.2" r="3.25"/><circle cx="902.2" cy="561.3" r="3.25"/><circle cx="903.5" cy="561.1" r="3.25"/><circle cx="904.7" cy="565.4" r="3.25"/><circle cx="905.9" cy="565.5" r="3.25"/><circle cx="907.1" cy="566.7" r="3.25"/><circle cx="908.4" cy="566.7" r="3.25"/><circle cx="909.6" cy="568.3" r="3.25"/><circle cx="910.8" cy="569.3" r="3.25"/><circle cx="912.0" cy="568.7" r="3.25"/><circle cx="913.3" cy="571.1" r="3.25"/><circle cx="914.5" cy="570.0" r="3.25"/><circle cx="915.7" cy="568.8" r="3.25"/><circle cx="916.9" cy="567.9" r="3.25"/><circle cx="918.2" cy="567.3" r="3.25"/><circle cx="919.4" cy="562.5" r="3.25"/><circle cx="920.6" cy="562.1" r="3.25"/><circle cx="921.8" cy="563.6" r="3.25"/><circle cx="923.1" cy="559.9" r="3.25"/><circle cx="924.3" cy="558.9" r="3.25"/><circle cx="925.5" cy="557.0" r="3.25"/><circle cx="926.7" cy="555.0" r="3.25"/><circle cx="928.0" cy="551.8" r="3.25"/><circle cx="929.2" cy="549.9" r="3.25"/><circle cx="930.4" cy="548.8" r="3.25"/><circle cx="931.6" cy="547.4" r="3.25"/><circle cx="932.9" cy="544.7" r="3.25"/><circle cx="934.1" cy="543.5" r="3.25"/><circle cx="935.3" cy="539.0" r="3.25"/><circle cx="936.4" cy="535.8" r="3.25"/><circle cx="937.5" cy="534.6" r="3.25"/><circle cx="938.6" cy="533.4" r="3.25"/><circle cx="939.7" cy="530.4" r="3.25"/><circle cx="940.9" cy="527.0" r="3.25"/><circle cx="942.1" cy="523.5" r="3.25"/><circle cx="943.3" cy="520.3" r="3.25"/><circle cx="944.5" cy="519.6" r="3.25"/><circle cx="945.7" cy="515.3" r="3.25"/><circle cx="947.0" cy="513.6" r="3.25"/><circle cx="948.2" cy="511.6" r="3.25"/><circle cx="949.1" cy="509.2" r="3.25"/><circle cx="950.0" cy="506.0" r="3.25"/><circle cx="950.9" cy="502.5" r="3.25"/><circle cx="951.7" cy="501.1" r="3.25"/><circle cx="952.6" cy="497.4" r="3.25"/></g><g fill="url(#gr)" stroke="#c04a48" stroke-width="0.95"><circle cx="652.6" cy="802.8" r="3.25"/><circle cx="653.8" cy="802.2" r="3.25"/><circle cx="655.0" cy="802.0" r="3.25"/><circle cx="656.3" cy="801.3" r="3.25"/><circle cx="657.5" cy="802.1" r="3.25"/><circle cx="658.7" cy="801.3" r="3.25"/><circle cx="659.9" cy="805.1" r="3.25"/><circle cx="661.2" cy="803.2" r="3.25"/><circle cx="662.4" cy="801.2" r="3.25"/><circle cx="663.6" cy="802.4" r="3.25"/><circle cx="664.8" cy="801.3" r="3.25"/><circle cx="666.1" cy="804.6" r="3.25"/><circle cx="667.3" cy="803.1" r="3.25"/><circle cx="668.5" cy="804.0" r="3.25"/><circle cx="669.7" cy="802.7" r="3.25"/><circle cx="671.0" cy="802.5" r="3.25"/><circle cx="672.2" cy="804.9" r="3.25"/><circle cx="673.4" cy="803.9" r="3.25"/><circle cx="674.6" cy="803.6" r="3.25"/><circle cx="675.9" cy="800.8" r="3.25"/><circle cx="677.1" cy="801.4" r="3.25"/><circle cx="678.3" cy="804.0" r="3.25"/><circle cx="679.5" cy="801.2" r="3.25"/><circle cx="680.8" cy="804.0" r="3.25"/><circle cx="682.0" cy="801.9" r="3.25"/><circle cx="683.2" cy="803.9" r="3.25"/><circle cx="684.4" cy="804.4" r="3.25"/><circle cx="685.7" cy="800.6" r="3.25"/><circle cx="686.9" cy="803.4" r="3.25"/><circle cx="688.1" cy="803.3" r="3.25"/><circle cx="689.3" cy="800.0" r="3.25"/><circle cx="690.6" cy="800.4" r="3.25"/><circle cx="691.8" cy="802.8" r="3.25"/><circle cx="693.0" cy="799.9" r="3.25"/><circle cx="694.2" cy="801.6" r="3.25"/><circle cx="695.5" cy="801.0" r="3.25"/><circle cx="696.7" cy="801.3" r="3.25"/><circle cx="697.5" cy="795.5" r="3.25"/><circle cx="698.4" cy="793.9" r="3.25"/><circle cx="699.1" cy="789.9" r="3.25"/><circle cx="699.8" cy="787.5" r="3.25"/><circle cx="700.4" cy="787.3" r="3.25"/><circle cx="701.0" cy="784.3" r="3.25"/><circle cx="701.6" cy="782.4" r="3.25"/><circle cx="702.2" cy="779.8" r="3.25"/><circle cx="702.9" cy="777.4" r="3.25"/><circle cx="703.5" cy="773.6" r="3.25"/><circle cx="704.1" cy="769.6" r="3.25"/><circle cx="704.7" cy="769.5" r="3.25"/><circle cx="705.3" cy="763.9" r="3.25"/><circle cx="705.7" cy="762.6" r="3.25"/><circle cx="706.2" cy="760.0" r="3.25"/><circle cx="706.7" cy="755.0" r="3.25"/><circle cx="707.1" cy="753.7" r="3.25"/><circle cx="707.6" cy="751.7" r="3.25"/><circle cx="708.1" cy="748.3" r="3.25"/><circle cx="708.5" cy="744.5" r="3.25"/><circle cx="708.9" cy="744.5" r="3.25"/><circle cx="709.4" cy="737.8" r="3.25"/><circle cx="709.8" cy="739.2" r="3.25"/><circle cx="710.2" cy="733.3" r="3.25"/><circle cx="710.7" cy="730.1" r="3.25"/><circle cx="711.1" cy="731.0" r="3.25"/><circle cx="711.5" cy="724.9" r="3.25"/><circle cx="711.9" cy="724.0" r="3.25"/><circle cx="712.2" cy="720.3" r="3.25"/><circle cx="712.6" cy="720.0" r="3.25"/><circle cx="713.0" cy="717.0" r="3.25"/><circle cx="713.4" cy="713.7" r="3.25"/><circle cx="713.8" cy="707.3" r="3.25"/><circle cx="714.3" cy="707.8" r="3.25"/><circle cx="714.8" cy="702.7" r="3.25"/><circle cx="715.3" cy="699.2" r="3.25"/><circle cx="715.8" cy="696.4" r="3.25"/><circle cx="716.3" cy="696.2" r="3.25"/><circle cx="716.9" cy="693.3" r="3.25"/><circle cx="717.4" cy="689.8" r="3.25"/><circle cx="718.0" cy="686.0" r="3.25"/><circle cx="718.6" cy="686.1" r="3.25"/><circle cx="719.2" cy="680.6" r="3.25"/><circle cx="719.8" cy="677.7" r="3.25"/><circle cx="720.2" cy="674.8" r="3.25"/><circle cx="720.7" cy="675.5" r="3.25"/><circle cx="721.1" cy="668.9" r="3.25"/><circle cx="721.5" cy="669.8" r="3.25"/><circle cx="721.9" cy="665.9" r="3.25"/><circle cx="722.4" cy="662.0" r="3.25"/><circle cx="722.9" cy="657.8" r="3.25"/><circle cx="723.6" cy="657.6" r="3.25"/><circle cx="724.3" cy="652.3" r="3.25"/><circle cx="725.1" cy="651.3" r="3.25"/><circle cx="725.8" cy="649.6" r="3.25"/><circle cx="727.0" cy="647.2" r="3.25"/><circle cx="728.2" cy="645.5" r="3.25"/><circle cx="729.4" cy="643.7" r="3.25"/><circle cx="730.7" cy="641.4" r="3.25"/><circle cx="731.9" cy="637.0" r="3.25"/><circle cx="733.1" cy="633.7" r="3.25"/><circle cx="734.3" cy="635.2" r="3.25"/><circle cx="735.6" cy="634.0" r="3.25"/><circle cx="736.8" cy="628.5" r="3.25"/><circle cx="738.0" cy="628.9" r="3.25"/><circle cx="739.2" cy="627.9" r="3.25"/><circle cx="740.5" cy="627.1" r="3.25"/><circle cx="741.7" cy="624.5" r="3.25"/><circle cx="742.9" cy="622.5" r="3.25"/><circle cx="744.1" cy="623.1" r="3.25"/><circle cx="745.4" cy="622.2" r="3.25"/><circle cx="746.6" cy="622.7" r="3.25"/><circle cx="747.8" cy="618.0" r="3.25"/><circle cx="749.0" cy="620.8" r="3.25"/><circle cx="750.3" cy="617.2" r="3.25"/><circle cx="751.5" cy="614.1" r="3.25"/><circle cx="752.7" cy="615.5" r="3.25"/><circle cx="753.9" cy="611.3" r="3.25"/><circle cx="755.1" cy="608.7" r="3.25"/><circle cx="756.4" cy="608.4" r="3.25"/><circle cx="757.6" cy="606.1" r="3.25"/><circle cx="758.8" cy="607.4" r="3.25"/><circle cx="760.0" cy="604.4" r="3.25"/><circle cx="761.3" cy="604.0" r="3.25"/><circle cx="762.5" cy="599.4" r="3.25"/><circle cx="763.7" cy="600.1" r="3.25"/><circle cx="764.9" cy="597.8" r="3.25"/><circle cx="766.2" cy="593.8" r="3.25"/><circle cx="767.4" cy="592.9" r="3.25"/><circle cx="768.6" cy="590.7" r="3.25"/><circle cx="769.8" cy="591.4" r="3.25"/><circle cx="771.1" cy="589.7" r="3.25"/><circle cx="772.3" cy="587.0" r="3.25"/><circle cx="773.5" cy="586.5" r="3.25"/><circle cx="774.7" cy="585.8" r="3.25"/><circle cx="776.0" cy="583.7" r="3.25"/><circle cx="777.2" cy="584.5" r="3.25"/><circle cx="778.4" cy="583.3" r="3.25"/><circle cx="779.6" cy="580.5" r="3.25"/><circle cx="780.9" cy="581.4" r="3.25"/><circle cx="782.1" cy="583.9" r="3.25"/><circle cx="783.3" cy="585.4" r="3.25"/><circle cx="784.5" cy="587.1" r="3.25"/><circle cx="785.8" cy="589.7" r="3.25"/><circle cx="787.0" cy="590.5" r="3.25"/><circle cx="788.2" cy="589.9" r="3.25"/><circle cx="789.4" cy="590.5" r="3.25"/><circle cx="790.7" cy="591.6" r="3.25"/><circle cx="791.9" cy="588.7" r="3.25"/><circle cx="793.1" cy="587.7" r="3.25"/><circle cx="794.3" cy="587.0" r="3.25"/><circle cx="795.6" cy="586.1" r="3.25"/><circle cx="796.8" cy="584.6" r="3.25"/><circle cx="798.0" cy="585.2" r="3.25"/><circle cx="799.2" cy="582.7" r="3.25"/><circle cx="800.5" cy="583.4" r="3.25"/><circle cx="801.7" cy="581.5" r="3.25"/><circle cx="802.9" cy="579.2" r="3.25"/><circle cx="804.1" cy="578.4" r="3.25"/><circle cx="805.4" cy="579.1" r="3.25"/><circle cx="806.6" cy="575.2" r="3.25"/><circle cx="807.8" cy="575.6" r="3.25"/><circle cx="809.0" cy="575.1" r="3.25"/><circle cx="810.3" cy="576.8" r="3.25"/><circle cx="811.5" cy="573.7" r="3.25"/><circle cx="812.7" cy="574.2" r="3.25"/><circle cx="813.9" cy="571.6" r="3.25"/><circle cx="815.2" cy="571.8" r="3.25"/><circle cx="816.4" cy="569.5" r="3.25"/><circle cx="817.6" cy="569.4" r="3.25"/><circle cx="818.8" cy="568.0" r="3.25"/><circle cx="820.0" cy="569.1" r="3.25"/><circle cx="821.3" cy="567.0" r="3.25"/><circle cx="822.5" cy="565.9" r="3.25"/><circle cx="823.7" cy="564.7" r="3.25"/><circle cx="824.9" cy="565.9" r="3.25"/><circle cx="826.2" cy="564.0" r="3.25"/><circle cx="827.4" cy="564.6" r="3.25"/><circle cx="828.6" cy="566.0" r="3.25"/><circle cx="829.8" cy="565.5" r="3.25"/><circle cx="831.1" cy="566.3" r="3.25"/><circle cx="832.3" cy="568.8" r="3.25"/><circle cx="833.5" cy="567.9" r="3.25"/><circle cx="834.7" cy="568.6" r="3.25"/><circle cx="836.0" cy="565.0" r="3.25"/><circle cx="837.2" cy="563.7" r="3.25"/><circle cx="838.4" cy="564.9" r="3.25"/><circle cx="839.6" cy="563.2" r="3.25"/><circle cx="840.9" cy="562.2" r="3.25"/><circle cx="842.1" cy="560.6" r="3.25"/><circle cx="843.3" cy="561.2" r="3.25"/><circle cx="844.5" cy="556.8" r="3.25"/><circle cx="845.8" cy="555.9" r="3.25"/><circle cx="847.0" cy="553.8" r="3.25"/><circle cx="848.2" cy="553.0" r="3.25"/><circle cx="849.4" cy="550.0" r="3.25"/><circle cx="850.7" cy="547.3" r="3.25"/><circle cx="851.9" cy="545.8" r="3.25"/><circle cx="853.1" cy="543.3" r="3.25"/><circle cx="854.3" cy="544.2" r="3.25"/><circle cx="855.6" cy="542.5" r="3.25"/><circle cx="856.8" cy="540.6" r="3.25"/><circle cx="858.0" cy="539.0" r="3.25"/><circle cx="859.2" cy="540.2" r="3.25"/><circle cx="860.5" cy="537.5" r="3.25"/><circle cx="861.7" cy="537.2" r="3.25"/><circle cx="862.9" cy="540.1" r="3.25"/><circle cx="864.1" cy="538.6" r="3.25"/><circle cx="865.4" cy="540.0" r="3.25"/><circle cx="866.6" cy="541.1" r="3.25"/><circle cx="867.8" cy="541.1" r="3.25"/><circle cx="869.0" cy="542.0" r="3.25"/><circle cx="870.3" cy="545.1" r="3.25"/><circle cx="871.5" cy="547.6" r="3.25"/><circle cx="872.7" cy="550.8" r="3.25"/><circle cx="873.9" cy="548.5" r="3.25"/><circle cx="875.2" cy="547.6" r="3.25"/><circle cx="876.4" cy="545.2" r="3.25"/><circle cx="877.6" cy="544.0" r="3.25"/><circle cx="878.8" cy="544.1" r="3.25"/><circle cx="880.1" cy="539.9" r="3.25"/><circle cx="881.3" cy="542.4" r="3.25"/><circle cx="882.5" cy="540.4" r="3.25"/><circle cx="883.7" cy="541.5" r="3.25"/><circle cx="885.0" cy="541.6" r="3.25"/><circle cx="886.2" cy="543.5" r="3.25"/><circle cx="887.4" cy="541.0" r="3.25"/><circle cx="888.6" cy="543.6" r="3.25"/><circle cx="889.8" cy="545.7" r="3.25"/><circle cx="891.1" cy="543.8" r="3.25"/><circle cx="892.3" cy="546.7" r="3.25"/><circle cx="893.5" cy="545.3" r="3.25"/><circle cx="894.7" cy="545.9" r="3.25"/><circle cx="896.0" cy="544.6" r="3.25"/><circle cx="897.2" cy="542.7" r="3.25"/><circle cx="898.4" cy="543.0" r="3.25"/><circle cx="899.6" cy="544.5" r="3.25"/><circle cx="900.9" cy="542.5" r="3.25"/><circle cx="902.1" cy="543.0" r="3.25"/><circle cx="903.3" cy="542.9" r="3.25"/><circle cx="904.5" cy="542.5" r="3.25"/><circle cx="905.8" cy="539.1" r="3.25"/><circle cx="907.0" cy="537.9" r="3.25"/><circle cx="908.2" cy="534.8" r="3.25"/><circle cx="909.4" cy="534.0" r="3.25"/><circle cx="910.7" cy="536.2" r="3.25"/><circle cx="911.9" cy="538.0" r="3.25"/><circle cx="913.1" cy="536.4" r="3.25"/><circle cx="914.3" cy="540.9" r="3.25"/><circle cx="915.6" cy="541.2" r="3.25"/><circle cx="916.8" cy="538.4" r="3.25"/><circle cx="918.0" cy="536.9" r="3.25"/><circle cx="919.2" cy="537.7" r="3.25"/><circle cx="920.5" cy="534.3" r="3.25"/><circle cx="921.7" cy="531.9" r="3.25"/><circle cx="922.9" cy="532.8" r="3.25"/><circle cx="924.1" cy="531.3" r="3.25"/><circle cx="925.4" cy="531.1" r="3.25"/><circle cx="926.6" cy="530.8" r="3.25"/><circle cx="927.8" cy="527.9" r="3.25"/><circle cx="929.0" cy="530.4" r="3.25"/><circle cx="930.3" cy="527.9" r="3.25"/><circle cx="931.5" cy="528.1" r="3.25"/><circle cx="932.7" cy="529.9" r="3.25"/><circle cx="933.9" cy="532.5" r="3.25"/><circle cx="935.2" cy="530.5" r="3.25"/><circle cx="936.4" cy="533.6" r="3.25"/><circle cx="937.6" cy="535.1" r="3.25"/><circle cx="938.8" cy="536.5" r="3.25"/><circle cx="940.1" cy="534.7" r="3.25"/><circle cx="941.3" cy="537.9" r="3.25"/><circle cx="942.5" cy="539.8" r="3.25"/><circle cx="943.7" cy="540.1" r="3.25"/><circle cx="945.0" cy="542.7" r="3.25"/><circle cx="946.2" cy="542.1" r="3.25"/><circle cx="947.4" cy="544.9" r="3.25"/><circle cx="948.6" cy="547.7" r="3.25"/><circle cx="949.9" cy="547.7" r="3.25"/><circle cx="951.1" cy="549.6" r="3.25"/><circle cx="951.7" cy="555.8" r="3.25"/><circle cx="952.2" cy="556.3" r="3.25"/><circle cx="952.7" cy="560.2" r="3.25"/></g><rect x="1005.5" y="489.5" width="129" height="53" fill="#fcfcfc" stroke="#d4d4d4"/><path d="M1015 506.5h28M1015 524.5h28" stroke="#00e000" stroke-width="1.2"/><circle cx="1029.5" cy="506.5" r="3.3" fill="#a9bdf2" stroke="#4169e1"/><circle cx="1029.5" cy="524.5" r="3.3" fill="#eeaaaa" stroke="#c0504d"/></svg><div class="a" style="left:812.5px;top:465.6px;font:normal normal 12.3px 'Liberation Sans',sans-serif;color:#111;line-height:1;white-space:nowrap;letter-spacing:-0.45px">POINT POSITION</div><div class="a" style="left:599.7px;width:60px;top:804.5px;text-align:center;font:12px 'Liberation Sans',sans-serif;line-height:1;color:#111;letter-spacing:0.2px">0</div><div class="a" style="left:599.7px;width:60px;top:763.1px;text-align:center;font:12px 'Liberation Sans',sans-serif;line-height:1;color:#111;letter-spacing:0.2px">0.02</div><div class="a" style="left:599.7px;width:60px;top:724.1px;text-align:center;font:12px 'Liberation Sans',sans-serif;line-height:1;color:#111;letter-spacing:0.2px">0.04</div><div class="a" style="left:599.7px;width:60px;top:685.1px;text-align:center;font:12px 'Liberation Sans',sans-serif;line-height:1;color:#111;letter-spacing:0.2px">0.06</div><div class="a" style="left:599.7px;width:60px;top:646.1px;text-align:center;font:12px 'Liberation Sans',sans-serif;line-height:1;color:#111;letter-spacing:0.2px">0.08</div><div class="a" style="left:599.7px;width:60px;top:607.1px;text-align:center;font:12px 'Liberation Sans',sans-serif;line-height:1;color:#111;letter-spacing:0.2px">0.1</div><div class="a" style="left:599.7px;width:60px;top:568.1px;text-align:center;font:12px 'Liberation Sans',sans-serif;line-height:1;color:#111;letter-spacing:0.2px">0.12</div><div class="a" style="left:599.7px;width:60px;top:529.1px;text-align:center;font:12px 'Liberation Sans',sans-serif;line-height:1;color:#111;letter-spacing:0.2px">0.14</div><div class="a" style="left:599.7px;width:60px;top:490.1px;text-align:center;font:12px 'Liberation Sans',sans-serif;line-height:1;color:#111;letter-spacing:0.2px">0.16</div><div class="a" style="left:632.6px;width:40px;top:821px;text-align:center;font:12px 'Liberation Sans',sans-serif;line-height:1;color:#111">0</div><div class="a" style="left:666.6px;width:40px;top:821px;text-align:center;font:12px 'Liberation Sans',sans-serif;line-height:1;color:#111">50</div><div class="a" style="left:700.6px;width:40px;top:821px;text-align:center;font:12px 'Liberation Sans',sans-serif;line-height:1;color:#111">100</div><div class="a" style="left:734.6px;width:40px;top:821px;text-align:center;font:12px 'Liberation Sans',sans-serif;line-height:1;color:#111">150</div><div class="a" style="left:768.7px;width:40px;top:821px;text-align:center;font:12px 'Liberation Sans',sans-serif;line-height:1;color:#111">200</div><div class="a" style="left:802.7px;width:40px;top:821px;text-align:center;font:12px 'Liberation Sans',sans-serif;line-height:1;color:#111">250</div><div class="a" style="left:836.7px;width:40px;top:821px;text-align:center;font:12px 'Liberation Sans',sans-serif;line-height:1;color:#111">300</div><div class="a" style="left:870.7px;width:40px;top:821px;text-align:center;font:12px 'Liberation Sans',sans-serif;line-height:1;color:#111">350</div><div class="a" style="left:904.7px;width:40px;top:821px;text-align:center;font:12px 'Liberation Sans',sans-serif;line-height:1;color:#111">400</div><div class="a" style="left:938.7px;width:40px;top:821px;text-align:center;font:12px 'Liberation Sans',sans-serif;line-height:1;color:#111">450</div><div class="a" style="left:972.8px;width:40px;top:821px;text-align:center;font:12px 'Liberation Sans',sans-serif;line-height:1;color:#111">500</div><div class="a" style="left:807px;top:849px;font:normal normal 12px 'Liberation Sans',sans-serif;color:#111;line-height:1;white-space:nowrap;">Stage</div><div class="a" style="left:535.5px;top:644px;width:122px;text-align:center;transform:rotate(-90deg);font:13px 'Liberation Sans',sans-serif;line-height:1;color:#111">Displacement E[mm]</div><div class="a" style="left:1048.5px;top:500.5px;font:normal normal 11px 'Liberation Sans',sans-serif;color:#111;line-height:1;white-space:nowrap;letter-spacing:-0.05px">Point Position 1</div><div class="a" style="left:1048.5px;top:518.5px;font:normal normal 11px 'Liberation Sans',sans-serif;color:#111;line-height:1;white-space:nowrap;letter-spacing:-0.05px">Point Position 0</div><div class="a" style="left:2px;top:872px;width:569px;height:9px;background:#ebebf0"></div><div class="a" style="left:574px;top:872px;width:570px;height:9px;background:#ebebf0;border-top:2px solid #c8cad6;box-sizing:border-box"></div><div class="a" style="left:2px;top:872px;width:42px;height:9px;background:#f7f7fa;border-right:1px solid #d4d4dc"></div><div class="a" style="left:665px;top:873px;width:54px;height:8px;background:#f7f7fa;border-left:1px solid #d4d4dc;border-right:1px solid #d4d4dc"></div><div class="a" style="left:0;top:877px;width:1144px;height:4px;overflow:hidden"><svg class="a" width="10" height="10" viewBox="0 0 10 10" style="left:7.0px;top:1px;overflow:visible"><path d="M0.5 0.5H9.5V9.5H0.5ZM3.2 1.8L2 3.5M3 2.2H7L3.5 5.5M4 3.2L7.5 5.5M3.5 6.7L6 7.6M3.2 8.2L6.5 9" fill="none" stroke="#1a5aaa" stroke-width="1.00"/></svg><svg class="a" width="10" height="10" viewBox="0 0 10 10" style="left:19.0px;top:1px;overflow:visible"><path d="M2.5 0.3L0.4 4.2M1.5 2.5V10M4.6 0.3L3.8 1.8M4.2 1.5H7L6.4 2.5M3.5 2.5H9.5V4.6H3.5ZM3.5 5.6H9.5M6 5.6L3.5 9.5M6.5 6.6L9.6 9.6M6.6 7.6L4.5 9.8M7.5 6V9.8" fill="none" stroke="#1a5aaa" stroke-width="1.00"/></svg><div class="a" style="left:32px;top:0px;font:normal normal 11px 'Liberation Sans',sans-serif;color:#1a5aaa;line-height:1;white-space:nowrap;">0</div><svg class="a" width="10" height="10" viewBox="0 0 10 10" style="left:51.0px;top:1px;overflow:visible"><path d="M0.3 3H4.6M2.5 0.3V10M2.5 3.6L0.4 7.6M2.6 4.2L4.6 6M5.6 1.2H9.6M5 4H10M7.6 4V9.6L6.8 10M6.2 6L5.2 8.6M8.8 6L10 8.6" fill="none" stroke="#222" stroke-width="1.00"/></svg><svg class="a" width="10" height="10" viewBox="0 0 10 10" style="left:62.0px;top:1px;overflow:visible"><path d="M1 2H9M5 0.3V4.6M2.4 4.6H7.6M1.4 6.5L0.6 8.6M3.2 6V9.5H8.4L8.8 8.4M5 6.4L6.2 7.6M8.6 6.2L9.8 8" fill="none" stroke="#222" stroke-width="1.00"/></svg><svg class="a" width="10" height="10" viewBox="0 0 10 10" style="left:73.0px;top:1px;overflow:visible"><path d="M4.6 0.3V3.5M4.6 1.8H8.4M2 3.5H8V6.6H2ZM1 8.2L0.4 9.8M3.6 8.4L4 9.8M6.2 8.4L6.8 9.8M8.8 8.2L9.8 9.8" fill="none" stroke="#222" stroke-width="1.00"/></svg><svg class="a" width="10" height="10" viewBox="0 0 10 10" style="left:580.0px;top:1px;overflow:visible"><path d="M0.5 0.5H9.5V9.5H0.5ZM3.2 1.8L2 3.5M3 2.2H7L3.5 5.5M4 3.2L7.5 5.5M3.5 6.7L6 7.6M3.2 8.2L6.5 9" fill="none" stroke="#222" stroke-width="1.00"/></svg><svg class="a" width="10" height="10" viewBox="0 0 10 10" style="left:592.0px;top:1px;overflow:visible"><path d="M2.5 0.3L0.4 4.2M1.5 2.5V10M4.6 0.3L3.8 1.8M4.2 1.5H7L6.4 2.5M3.5 2.5H9.5V4.6H3.5ZM3.5 5.6H9.5M6 5.6L3.5 9.5M6.5 6.6L9.6 9.6M6.6 7.6L4.5 9.8M7.5 6V9.8" fill="none" stroke="#222" stroke-width="1.00"/></svg><div class="a" style="left:605px;top:0px;font:normal normal 11px 'Liberation Sans',sans-serif;color:#222;line-height:1;white-space:nowrap;">1</div><svg class="a" width="10" height="10" viewBox="0 0 10 10" style="left:624.0px;top:1px;overflow:visible"><path d="M1.6 0.6L0.8 3H4.4M2.6 0.3V10M0.3 6.8L4.4 5.2M6 0.3L4.8 3.4M5.4 2.2H9.8V9.4L8.6 10M7.2 2.2L5 7.6M8.8 2.2L5.6 9.6" fill="none" stroke="#222" stroke-width="1.00"/></svg><svg class="a" width="10" height="10" viewBox="0 0 10 10" style="left:635.0px;top:1px;overflow:visible"><path d="M2.5 0.3L0.4 4.2M1.5 2.5V10M3.8 3H10M6.9 0.3V10M6.9 3.2L4 8.2M6.9 3.2L9.8 8.2M5.2 7.8H8.6" fill="none" stroke="#222" stroke-width="1.00"/></svg><svg class="a" width="10" height="10" viewBox="0 0 10 10" style="left:646.0px;top:1px;overflow:visible"><path d="M4.6 0.3V3.5M4.6 1.8H8.4M2 3.5H8V6.6H2ZM1 8.2L0.4 9.8M3.6 8.4L4 9.8M6.2 8.4L6.8 9.8M8.8 8.2L9.8 9.8" fill="none" stroke="#222" stroke-width="1.00"/></svg><svg class="a" width="10" height="10" viewBox="0 0 10 10" style="left:672.0px;top:1px;overflow:visible"><path d="M3.6 0.3L0.3 4.6M6.4 0.3L9.7 4.2M2 5.5H8.2V8.8L7.2 9.6H6.2M4.6 5.5Q4.2 8.6 0.8 10" fill="none" stroke="#1a5aaa" stroke-width="1.00"/></svg><svg class="a" width="10" height="10" viewBox="0 0 10 10" style="left:683.0px;top:1px;overflow:visible"><path d="M0.3 3H4.6M2.5 0.3V10M2.5 3.6L0.4 7.6M2.6 4.2L4.6 6M9.6 0.4L5.6 1.8V7Q5.6 9 4.8 10M5.6 4.6H10M8.2 4.6V10" fill="none" stroke="#1a5aaa" stroke-width="1.00"/></svg><svg class="a" width="10" height="10" viewBox="0 0 10 10" style="left:694.0px;top:1px;overflow:visible"><path d="M0.5 2.5H9.5V9.5H0.5ZM3.5 0V9.5M6.5 0V9.5M0.5 6H9.5" fill="none" stroke="#1a5aaa" stroke-width="1.00"/></svg><svg class="a" width="10" height="10" viewBox="0 0 10 10" style="left:705.0px;top:1px;overflow:visible"><path d="M2.6 0.3L0.5 3.6H3M3.2 2.6L0.5 6.6H3.6M0.4 9.6L3.6 8.2M4.6 3H9.6M4.4 6H10M6.4 0.3L9.6 10M9.6 6.8L6 10M8.4 0.4L9.6 1.6" fill="none" stroke="#1a5aaa" stroke-width="1.00"/></svg><svg class="a" width="10" height="10" viewBox="0 0 10 10" style="left:726.0px;top:1px;overflow:visible"><path d="M0.4 1.8H4.4M2.4 0.3L1 5.4H4.6M2.8 3.8V10M0.3 7.6H4.6M6.6 0.3V4.2M5.4 2.6H8.6L8.8 9L9.8 8.4M7.4 2.6V5L5 10" fill="none" stroke="#222" stroke-width="1.00"/></svg><svg class="a" width="10" height="10" viewBox="0 0 10 10" style="left:737.0px;top:1px;overflow:visible"><path d="M0.8 0.8L2 2M0.3 4.2H2V8.4L0.3 9.6M2 9.4Q3 10 10 9.8M6.2 0.3V1.4M4.2 1.6H9.8M5.6 3V5.4L4.6 7.6M8.6 3V7.8M7 4.2L6 5.8M9.8 4.2L10 5.8" fill="none" stroke="#222" stroke-width="1.00"/></svg></div></body></html>
